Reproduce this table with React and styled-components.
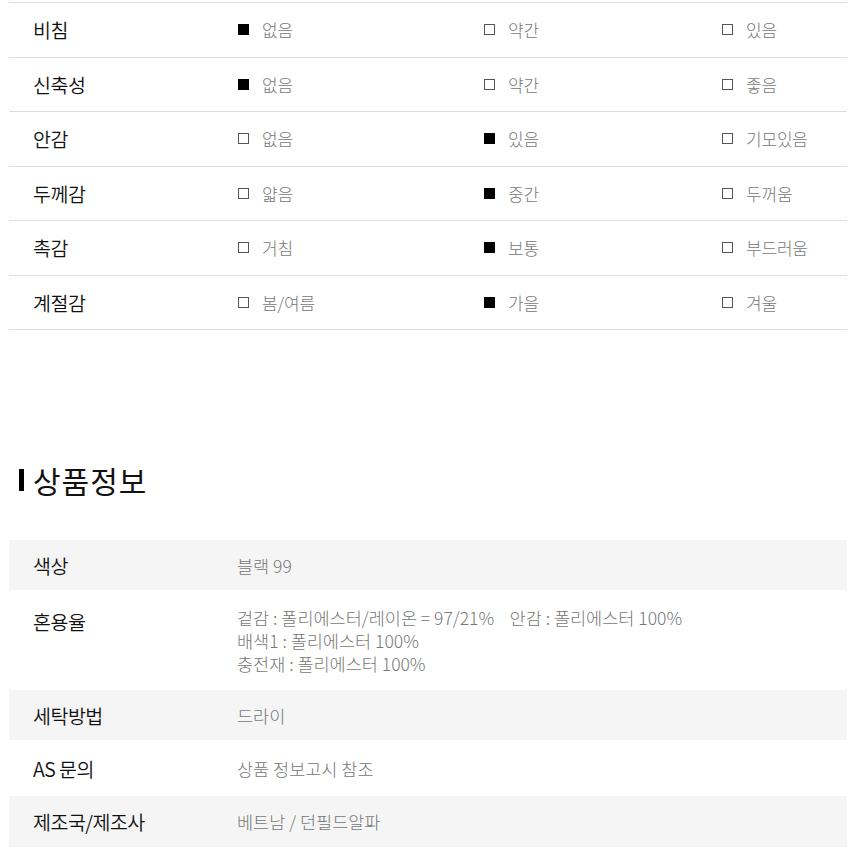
import styled, { createGlobalStyle } from "styled-components";

const GlobalStyle = createGlobalStyle`
  html, body {
    margin: 0;
    padding: 0;
    background: #fff;
  }
  body {
    font-family: "Noto Sans CJK KR", "Noto Sans", sans-serif;
  }
`;

// 소재 특성 표
const features = [
  { label: "비침", options: ["없음", "약간", "있음"], checked: 0 },
  { label: "신축성", options: ["없음", "약간", "좋음"], checked: 0 },
  { label: "안감", options: ["없음", "있음", "기모있음"], checked: 1 },
  { label: "두께감", options: ["얇음", "중간", "두꺼움"], checked: 1 },
  { label: "촉감", options: ["거침", "보통", "부드러움"], checked: 1 },
  { label: "계절감", options: ["봄/여름", "가을", "겨울"], checked: 1 },
];

// 상품정보 고시
const info = [
  { label: "색상", lines: ["블랙 99"], h: 50 },
  {
    label: "혼용율",
    lines: [
      "겉감 : 폴리에스터/레이온 = 97/21%\u00a0\u00a0\u00a0 안감 : 폴리에스터 100%",
      "배색1 :  폴리에스터 100%",
      "충전재 : 폴리에스터 100%",
    ],
    h: 100,
  },
  { label: "세탁방법", lines: ["드라이"], h: 50 },
  { label: "AS 문의", lines: ["상품 정보고시 참조"], h: 56 },
  { label: "제조국/제조사", lines: ["베트남 / 던필드알파"], h: 51 },
];

export default function App() {
  return (
    <Page>
      <GlobalStyle />
      <FeatureTable>
        {features.map((f) => (
          <FeatureRow key={f.label}>
            <Label>{f.label}</Label>
            {f.options.map((opt, i) => (
              <Option key={opt}>
                <Box $on={i === f.checked} />
                {opt}
              </Option>
            ))}
          </FeatureRow>
        ))}
      </FeatureTable>

      <Heading>상품정보</Heading>

      <InfoTable>
        {info.map((row, i) => (
          <InfoRow key={row.label} $shade={i % 2 === 0} $h={row.h} $multi={row.lines.length > 1}>
            <Label>{row.label}</Label>
            <Value>
              {row.lines.map((l) => (
                <div key={l}>{l}</div>
              ))}
            </Value>
          </InfoRow>
        ))}
      </InfoTable>
    </Page>
  );
}

const Page = styled.div`
  padding: 2px 9px 9px;
`;

const FeatureTable = styled.div`
  border-top: 1px solid #dedede;
`;

const FeatureRow = styled.div`
  display: grid;
  grid-template-columns: 229px 246px 238px 1fr;
  align-items: center;
  height: 53.5px;
  border-bottom: 1px solid #dedede;
`;

const Label = styled.div`
  padding-left: 24px;
  font-size: 19.5px;
  font-weight: 350;
  color: #111;
  letter-spacing: -0.5px;
`;

const Option = styled.div`
  display: flex;
  align-items: center;
  gap: 13px;
  font-size: 17px;
  font-weight: 300;
  color: #777;
  letter-spacing: -0.2px;
`;

const Box = styled.span`
  display: inline-block;
  box-sizing: border-box;
  width: 11px;
  height: 11px;
  border: 1px solid ${(p) => (p.$on ? "#000" : "#555")};
  background: ${(p) => (p.$on ? "#000" : "#fff")};
`;

const Heading = styled.h2`
  display: flex;
  align-items: center;
  gap: 9px;
  margin: 130px 0 40px 10px;
  font-size: 30px;
  font-weight: 400;
  line-height: 40px;
  color: #111;
  letter-spacing: 1px;
  &::before {
    content: "";
    width: 5px;
    height: 22px;
    background: #000;
  }
`;

const InfoTable = styled.div``;

const InfoRow = styled.div`
  display: grid;
  grid-template-columns: 228px 1fr;
  align-items: center;
  height: ${(p) => p.$h}px;
  background: ${(p) => (p.$shade ? "#f5f5f5" : "#fff")};
  ${Label} {
    align-self: ${(p) => (p.$multi ? "start" : "center")};
    margin-top: ${(p) => (p.$multi ? "17px" : "0")};
  }
`;

const Value = styled.div`
  font-size: 17.5px;
  font-weight: 300;
  color: #777;
  line-height: 23px;
  letter-spacing: 0;
`;
